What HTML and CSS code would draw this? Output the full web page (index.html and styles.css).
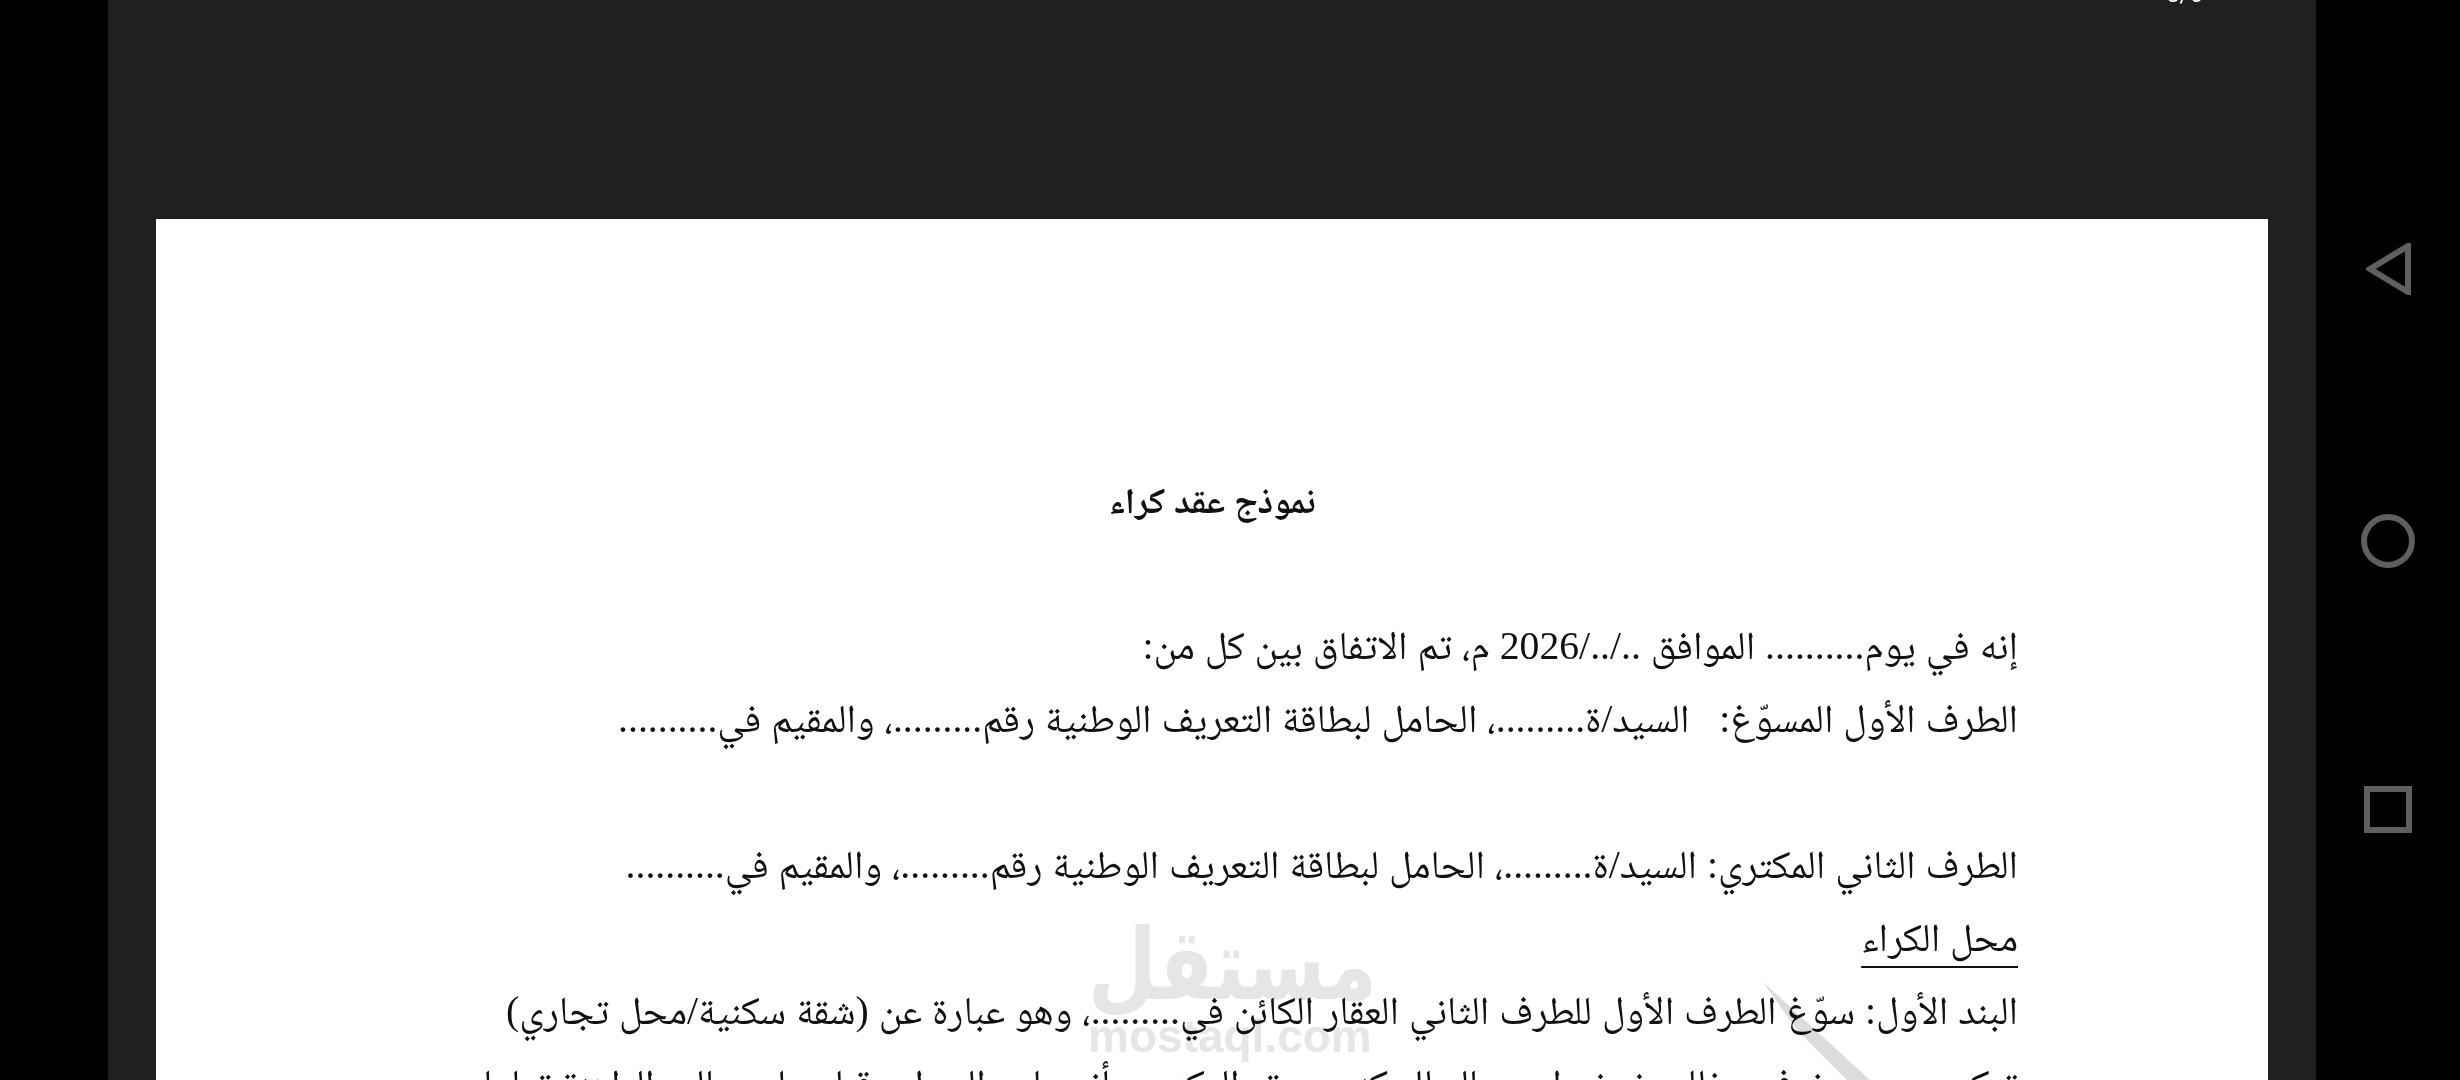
FILE: index.html
```html
<!DOCTYPE html>
<html lang="ar">
<head>
  <meta charset="utf-8">
  <link rel="stylesheet" href="styles.css">
</head>
<body>
  <div class="screen">
    <main class="viewer">
      <div class="page-count">5/6</div>
      <article class="page" dir="rtl">
        <h1>نموذج عقد كراء</h1>
        <p>إنه في يوم.......... الموافق ../../2026 م، تم الاتفاق بين كل من:</p>
        <p>الطرف الأول المسوّغ:   السيد/ة.........، الحامل لبطاقة التعريف الوطنية رقم.........، والمقيم في..........</p>
        <p class="blank">&nbsp;</p>
        <p>الطرف الثاني المكتري: السيد/ة.........، الحامل لبطاقة التعريف الوطنية رقم.........، والمقيم في..........</p>
        <p><span class="underlined">محل الكراء</span></p>
        <p>البند الأول: سوّغ الطرف الأول للطرف الثاني العقار الكائن في.........، وهو عبارة عن (شقة سكنية/محل تجاري)</p>
        <p>تتكون من ... غرف، وذلك بغرض استعماله للسكنى، ويقر المكتري بأنه عاين المحل وقبله على حالته الراهنة تماما</p>
      </article>
      <div class="watermark">
        <div class="watermark-ar">مستقل</div>
        <div class="watermark-en">mostaql.com</div>
      </div>
      <svg class="watermark-line" width="120" height="110" viewBox="0 0 120 110">
        <polygon points="3,12 110,110 87,110 37,60"></polygon>
      </svg>
    </main>
    <nav class="nav">
      <svg width="45" height="52" viewBox="0 0 45 52"><path d="M42 3 V49 L4 26 Z"></path></svg>
      <svg width="54" height="54" viewBox="0 0 54 54"><circle cx="27" cy="27" r="24"></circle></svg>
      <svg width="48" height="47" viewBox="0 0 48 47"><rect x="3" y="3" width="42" height="41"></rect></svg>
    </nav>
  </div>
</body>
</html>
```

FILE: styles.css
```css
html, body {
  margin: 0;
  padding: 0;
  background: #000;
}

.screen {
  display: flex;
  width: 2460px;
  height: 1080px;
  overflow: hidden;
  padding-left: 108px;
  box-sizing: border-box;
}

.viewer {
  position: relative;
  width: 2208px;
  height: 1080px;
  padding: 219px 48px 0;
  box-sizing: border-box;
  background: #202020;
  overflow: hidden;
}

.page-count {
  position: absolute;
  top: -21px;
  left: 2058px;
  color: #fff;
  font: 24px/30px Roboto, sans-serif;
}

.page {
  height: 1200px;
  padding: 252px 250px 0;
  box-sizing: border-box;
  background: #fff;
  color: #111;
  font-family: "Liberation Serif", "Noto Naskh Arabic", "Amiri", "Scheherazade New", "Traditional Arabic", "DejaVu Serif", "DejaVu Sans", serif;
}

h1 {
  margin: 0 0 79px;
  font-size: 36px;
  line-height: 60px;
  font-weight: 700;
  text-align: center;
}

p {
  margin: 0;
  font-size: 39.7px;
  line-height: 73px;
  white-space: pre;
}

.underlined {
  text-decoration: underline;
  text-decoration-thickness: 2px;
  text-underline-offset: 15px;
}

.watermark {
  position: absolute;
  top: 915px;
  left: 980px;
  width: 282px;
  mix-blend-mode: multiply;
  color: #e6e6e6;
  text-align: center;
}

.watermark-ar {
  height: 98px;
  transform: scaleY(1.25);
  font: 700 79px/100px "DejaVu Sans", sans-serif;
}

.watermark-en {
  font: 700 46px/46px "Liberation Sans", sans-serif;
}

.watermark-line {
  position: absolute;
  top: 970px;
  left: 1652px;
  mix-blend-mode: multiply;
  fill: #dcdcdc;
}

.nav {
  display: flex;
  flex-direction: column;
  align-items: center;
  width: 144px;
  padding-top: 243px;
  gap: 218.5px;
}

.nav svg {
  fill: none;
  stroke: #5f5f5f;
  stroke-width: 6;
}
```
